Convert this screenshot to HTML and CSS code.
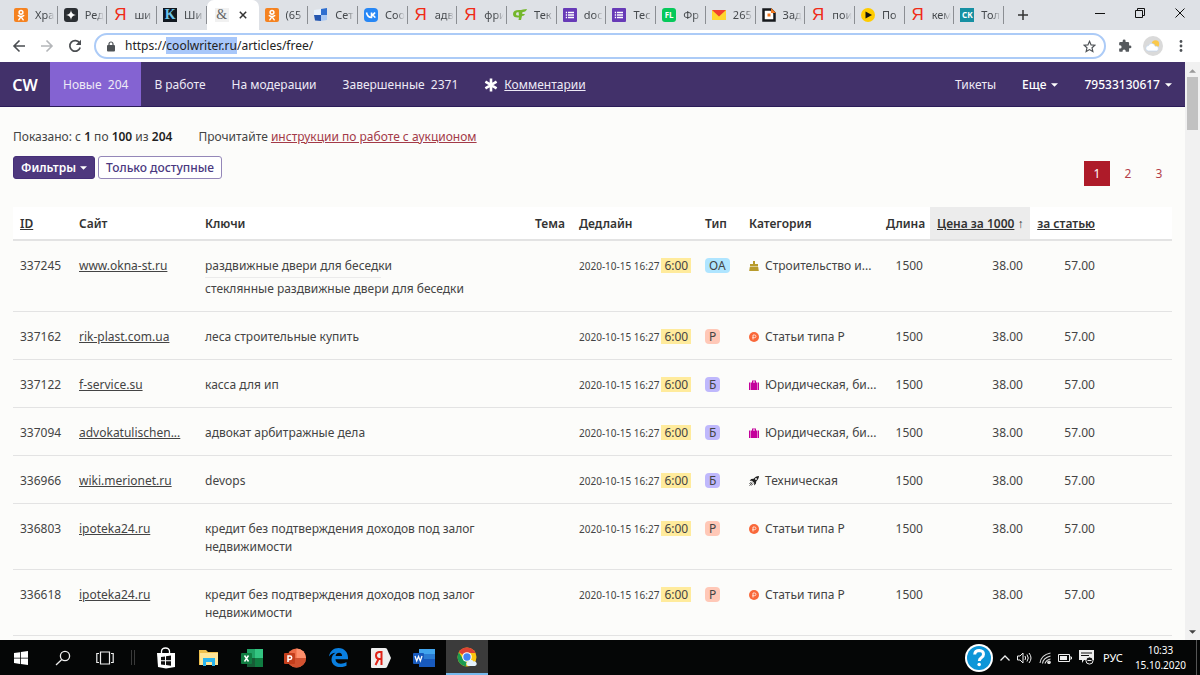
FILE: index.html
```html
<!DOCTYPE html>
<html lang="ru">
<head>
<meta charset="utf-8">
<title>coolwriter.ru</title>
<link rel="stylesheet" href="styles.css">
</head>
<body>
<svg class="defs" aria-hidden="true">
  <symbol id="ok" viewBox="0 0 14 14"><rect width="14" height="14" rx="2" fill="#f58220"/><circle cx="7" cy="4.3" r="1.9" fill="none" stroke="#fff" stroke-width="1.5"/><path d="M4.3 7.6q2.7 1.8 5.4 0M7 8.6L4.8 11.8M7 8.6l2.2 3.2" fill="none" stroke="#fff" stroke-width="1.5" stroke-linecap="round"/></symbol>
  <symbol id="form" viewBox="0 0 14 14"><rect width="14" height="14" rx="1" fill="#673ab7"/><path d="M5 4.5h6M5 7h6M5 9.500h6M2.800 4.500h1.300M2.800 7h1.300M2.800 9.500h1.300" stroke="#fff" stroke-width="1.300"/></symbol>
  <symbol id="brush" viewBox="0 0 10 10"><path d="M4 0h2v3h3v2.500H1V3h3zM.8 6h8.400l.6 4H.2z" fill="#b89b2c"/></symbol>
  <symbol id="rub" viewBox="0 0 10 10"><circle cx="5" cy="5" r="5" fill="#f9683a"/><path d="M4 7.500V3h1.600a1.300 1.300 0 0 1 0 2.700H3.300" fill="none" stroke="#ffe0d2" stroke-width="1"/></symbol>
  <symbol id="bag" viewBox="0 0 10 10"><path d="M0 2.500h1.200V10H0zM1.700 2.500H3V.5h4v2h1.300V10H1.700zM4 1.400v1.100h2V1.400zM8.800 2.500H10V10H8.800z" fill="#c4009b" fill-rule="evenodd"/></symbol>
  <symbol id="rocket" viewBox="0 0 10 10"><path d="M10 0C7.500.2 6 1.200 4.600 2.700L2.200 3 .6 4.800l2.400-.1L5.200 7l-.1 2.400L6.900 7.800l.3-2.400C8.700 4 9.800 2.500 10 0z" fill="#222"/><path d="M2.500 5.800L.4 8M3.300 6.700L.5 9.600M4.200 7.500L2.200 9.600" stroke="#222" stroke-width=".8"/><circle cx="7" cy="3" r=".9" fill="#fff"/></symbol>
  <symbol id="caret" viewBox="0 0 8 4"><path d="M0 0h8L4 4z" fill="currentColor"/></symbol>
</svg>

<header class="browser">
  <div class="tabstrip">
    <nav class="tabs" aria-label="Вкладки">
      <a class="tab" href="#"><svg class="fav"><use href="#ok"/></svg><span class="tab-text">Хра</span></a>
      <a class="tab" href="#"><svg class="fav" viewBox="0 0 14 14"><rect width="14" height="14" rx="3" fill="#2b2f33"/><path d="M7 2q.4 4.600 5 5-4.600.4-5 5-.4-4.600-5-5 4.600-.4 5-5z" fill="#fff"/></svg><span class="tab-text">Ред</span></a>
      <a class="tab" href="#"><span class="fav ya">Я</span><span class="tab-text">ши</span></a>
      <a class="tab" href="#"><span class="fav kk">K</span><span class="tab-text">Ши</span></a>
      <a class="tab tab-active" href="#"><span class="fav amp">&amp;</span><svg class="close" viewBox="0 0 8 8"><path d="M.8.8l6.400 6.400M7.200.8L.8 7.200" stroke="#333" stroke-width="1.500"/></svg></a>
      <a class="tab" href="#"><svg class="fav"><use href="#ok"/></svg><span class="tab-text">(65</span></a>
      <a class="tab" href="#"><svg class="fav" viewBox="0 0 14 14"><path d="M0 2l7-1v6H0z" fill="#e8f1fb"/><path d="M7 1l6-1v7H7z" fill="#2f6fd0"/><path d="M0 7h7v6l-6-.5z" fill="#2456b0"/><path d="M7 7h6v5l-6 1z" fill="#a9c8f3"/></svg><span class="tab-text">Сет</span></a>
      <a class="tab" href="#"><svg class="fav" viewBox="0 0 14 14"><rect width="14" height="14" rx="4" fill="#2787f5"/><path d="M2.500 4.500q1 5 5 5v-5M7.500 7q2.200-.2 3.500-2.500M7.500 7q2.500.3 3.800 2.600" fill="none" stroke="#fff" stroke-width="1.600"/></svg><span class="tab-text">Соо</span></a>
      <a class="tab" href="#"><span class="fav ya">Я</span><span class="tab-text">адв</span></a>
      <a class="tab" href="#"><span class="fav ya">Я</span><span class="tab-text">фри</span></a>
      <a class="tab" href="#"><svg class="fav" viewBox="0 0 14 14"><path d="M14 1q-1 3-4 3h-.5l-.3 2H12q-.5 2-3 2L8 12H5.500L6 9.500Q0 10 0 6q0-4 6-4 2 0 4-.5zM5.500 4Q3 4 3 6t3 1.500z" fill="#74b72b" fill-rule="evenodd"/></svg><span class="tab-text">Тек</span></a>
      <a class="tab" href="#"><svg class="fav"><use href="#form"/></svg><span class="tab-text">doc</span></a>
      <a class="tab" href="#"><svg class="fav"><use href="#form"/></svg><span class="tab-text">Тес</span></a>
      <a class="tab" href="#"><span class="fav fl">FL</span><span class="tab-text">Фр</span></a>
      <a class="tab" href="#"><svg class="fav" viewBox="0 0 14 14"><path d="M0 2h14v10H0z" fill="#ffd52e"/><path d="M0 2h14L7 8.500z" fill="#f0402f"/></svg><span class="tab-text">265</span></a>
      <a class="tab" href="#"><svg class="fav" viewBox="0 0 14 14"><path d="M1.500 1.500H9l3.500 3.500v7.500h-11z" fill="#fff" stroke="#16181c" stroke-width="2.500"/><path d="M9 0l5 5H9z" fill="#f47b20"/><rect x="5.500" y="5.500" width="3" height="3" fill="#f47b20"/></svg><span class="tab-text">Зад</span></a>
      <a class="tab" href="#"><span class="fav ya">Я</span><span class="tab-text">пои</span></a>
      <a class="tab" href="#"><svg class="fav" viewBox="0 0 14 14"><circle cx="7" cy="7" r="7" fill="#fc0"/><path d="M4.500 3.500L11 7l-6.500 3.500z" fill="#111"/></svg><span class="tab-text">По</span></a>
      <a class="tab" href="#"><span class="fav ya">Я</span><span class="tab-text">кем</span></a>
      <a class="tab" href="#"><span class="fav ck">СК</span><span class="tab-text">Тол</span></a>
    </nav>
    <button class="new-tab" aria-label="Новая вкладка"><svg width="12" height="12" viewBox="0 0 12 12"><path d="M6 1v10M1 6h10" stroke="#333" stroke-width="1.500"/></svg></button>
    <div class="window-buttons">
      <button aria-label="Свернуть"><svg width="10" height="10"><path d="M0 5.500h10" stroke="#111"/></svg></button>
      <button aria-label="Восстановить"><svg width="10" height="10" fill="none" stroke="#111"><path d="M.5 2.500h7v7h-7zM2.500 2.500v-2h7v7h-2"/></svg></button>
      <button aria-label="Закрыть"><svg width="10" height="10"><path d="M.5.5l9 9M9.500.5l-9 9" stroke="#111"/></svg></button>
    </div>
  </div>
  <div class="toolbar">
    <button class="tool" aria-label="Назад"><svg width="14" height="14" viewBox="0 0 14 14" fill="none" stroke="#4a4d51" stroke-width="1.600"><path d="M13 7H2M7.500 1.500L2 7l5.500 5.500"/></svg></button>
    <button class="tool" aria-label="Вперед"><svg width="14" height="14" viewBox="0 0 14 14" fill="none" stroke="#b4b6b9" stroke-width="1.600"><path d="M1 7h11M6.500 1.500L12 7l-5.500 5.500"/></svg></button>
    <button class="tool" aria-label="Обновить"><svg width="14" height="14" viewBox="0 0 14 14"><path d="M11.600 4A5.300 5.300 0 1 0 12.200 8.500" fill="none" stroke="#4a4d51" stroke-width="1.700"/><path d="M13 .8V6H7.800z" fill="#4a4d51"/></svg></button>
    <div class="address">
      <svg width="8" height="11" viewBox="0 0 8 11"><path d="M2 4.500V3a2 2 0 0 1 4 0v1.500" fill="none" stroke="#4e5256" stroke-width="1.200"/><rect y="4" width="8" height="6.500" rx="1" fill="#4e5256"/></svg>
      <span class="url">https://<mark>coolwriter.ru</mark>/articles/free/</span>
      <svg width="13" height="13" viewBox="0 0 24 24"><path d="M12 2.500l2.900 6.500 7.100.7-5.300 4.700 1.500 7-6.200-3.700-6.200 3.700 1.500-7L2 9.700 9.100 9z" fill="none" stroke="#4e5256" stroke-width="2.200"/></svg>
    </div>
    <button class="tool" aria-label="Расширения"><svg width="14" height="14" viewBox="0 0 24 24"><path d="M20.500 11H19V7a2 2 0 0 0-2-2h-4V3.500a2.500 2.500 0 0 0-5 0V5H4a2 2 0 0 0-2 2v3.800h1.500a2.700 2.700 0 0 1 0 5.400H2V20a2 2 0 0 0 2 2h3.800v-1.500a2.700 2.700 0 0 1 5.400 0V22H17a2 2 0 0 0 2-2v-4h1.500a2.500 2.500 0 0 0 0-5z" fill="#55595d"/></svg></button>
    <button class="tool" aria-label="Профиль"><svg width="20" height="20" viewBox="0 0 20 20"><circle cx="10" cy="10" r="10" fill="#dadada"/><circle cx="12.500" cy="8" r="3.700" fill="#fbc94a"/><path d="M5.500 15a2.700 2.700 0 0 1 0-5.400 3.500 3.500 0 0 1 6.700.6 2.400 2.400 0 0 1 1.500 4.800z" fill="#fff" stroke="#b9d2ee" stroke-width=".6"/></svg></button>
    <button class="tool" aria-label="Меню"><svg width="4" height="14"><g fill="#4e5256"><circle cx="2" cy="2.500" r="1.400"/><circle cx="2" cy="7" r="1.400"/><circle cx="2" cy="11.500" r="1.400"/></g></svg></button>
  </div>
</header>

<div class="viewport">
  <div class="page">
    <nav class="site-nav">
      <a class="brand" href="#">CW</a>
      <a class="nav-link nav-current" href="#">Новые&nbsp; 204</a>
      <a class="nav-link" href="#">В работе</a>
      <a class="nav-link" href="#">На модерации</a>
      <a class="nav-link" href="#">Завершенные&nbsp; 2371</a>
      <a class="nav-link nav-comments" href="#"><svg width="14" height="14" viewBox="0 0 14 14"><path d="M7 .5v13M1.400 3.700l11.200 6.600M12.600 3.700L1.400 10.300" stroke="#fff" stroke-width="2.600"/></svg><u>Комментарии</u></a>
      <a class="nav-link nav-push" href="#">Тикеты</a>
      <button class="nav-link nav-menu">Еще <svg width="7" height="4"><use href="#caret"/></svg></button>
      <button class="nav-link nav-menu">79533130617 <svg width="7" height="4"><use href="#caret"/></svg></button>
    </nav>
    <main class="content">
      <section class="list-head">
        <div>
          <div class="info"><span>Показано: с <b>1</b> по <b>100</b> из <b>204</b></span><span>Прочитайте <a href="#">инструкции по работе с аукционом</a></span></div>
          <div class="filters"><button class="btn btn-solid">Фильтры <svg width="7" height="4"><use href="#caret"/></svg></button><button class="btn">Только доступные</button></div>
        </div>
        <nav class="pager" aria-label="Страницы"><a class="pager-current" href="#">1</a><a href="#">2</a><a href="#">3</a></nav>
      </section>
      <table class="articles">
        <colgroup><col class="c-id"><col class="c-site"><col><col class="c-theme"><col class="c-date"><col class="c-type"><col class="c-cat"><col class="c-len"><col class="c-price"><col class="c-total"><col class="c-end"></colgroup>
        <thead><tr><th><a href="#">ID</a></th><th>Сайт</th><th>Ключи</th><th>Тема</th><th>Дедлайн</th><th>Тип</th><th>Категория</th><th class="num">Длина</th><th class="num sorted"><a href="#">Цена за 1000</a> ↑</th><th class="num"><a href="#">за статью</a></th><th></th></tr></thead>
        <tbody>
          <tr><td>337245</td><td><a href="#">www.okna-st.ru</a></td><td><div class="key key-first">раздвижные двери для беседки</div><div class="key">стеклянные раздвижные двери для беседки</div></td><td></td><td><time>2020-10-15 16:27</time><span class="left">6:00</span></td><td><span class="type type-oa">ОА</span></td><td><svg class="cat"><use href="#brush"/></svg>Строительство и...</td><td class="num">1500</td><td class="num">38.00</td><td class="num">57.00</td><td></td></tr>
          <tr><td>337162</td><td><a href="#">rik-plast.com.ua</a></td><td>леса строительные купить</td><td></td><td><time>2020-10-15 16:27</time><span class="left">6:00</span></td><td><span class="type type-r">Р</span></td><td><svg class="cat"><use href="#rub"/></svg>Статьи типа Р</td><td class="num">1500</td><td class="num">38.00</td><td class="num">57.00</td><td></td></tr>
          <tr><td>337122</td><td><a href="#">f-service.su</a></td><td>касса для ип</td><td></td><td><time>2020-10-15 16:27</time><span class="left">6:00</span></td><td><span class="type type-b">Б</span></td><td><svg class="cat"><use href="#bag"/></svg>Юридическая, би...</td><td class="num">1500</td><td class="num">38.00</td><td class="num">57.00</td><td></td></tr>
          <tr><td>337094</td><td><a href="#">advokatulischen...</a></td><td>адвокат арбитражные дела</td><td></td><td><time>2020-10-15 16:27</time><span class="left">6:00</span></td><td><span class="type type-b">Б</span></td><td><svg class="cat"><use href="#bag"/></svg>Юридическая, би...</td><td class="num">1500</td><td class="num">38.00</td><td class="num">57.00</td><td></td></tr>
          <tr><td>336966</td><td><a href="#">wiki.merionet.ru</a></td><td>devops</td><td></td><td><time>2020-10-15 16:27</time><span class="left">6:00</span></td><td><span class="type type-b">Б</span></td><td><svg class="cat"><use href="#rocket"/></svg>Техническая</td><td class="num">1500</td><td class="num">38.00</td><td class="num">57.00</td><td></td></tr>
          <tr><td>336803</td><td><a href="#">ipoteka24.ru</a></td><td><div class="key">кредит без подтверждения доходов под залог недвижимости</div></td><td></td><td><time>2020-10-15 16:27</time><span class="left">6:00</span></td><td><span class="type type-r">Р</span></td><td><svg class="cat"><use href="#rub"/></svg>Статьи типа Р</td><td class="num">1500</td><td class="num">38.00</td><td class="num">57.00</td><td></td></tr>
          <tr><td>336618</td><td><a href="#">ipoteka24.ru</a></td><td><div class="key">кредит без подтверждения доходов под залог недвижимости</div></td><td></td><td><time>2020-10-15 16:27</time><span class="left">6:00</span></td><td><span class="type type-r">Р</span></td><td><svg class="cat"><use href="#rub"/></svg>Статьи типа Р</td><td class="num">1500</td><td class="num">38.00</td><td class="num">57.00</td><td></td></tr>
        </tbody>
      </table>
    </main>
  </div>
  <div class="scrollbar" aria-hidden="true"><svg width="7" height="4" viewBox="0 0 8 4"><path d="M0 4h8L4 0z" fill="#999"/></svg><div class="thumb"></div><svg width="7" height="4" viewBox="0 0 8 4"><path d="M0 0h8L4 4z" fill="#444"/></svg></div>
</div>

<footer class="taskbar">
  <button class="task" aria-label="Пуск"><svg width="14" height="14"><path d="M0 2l6-.8v5.500H0zM6.800 1L14 0v6.700H6.800zM0 7.400h6v5.500L0 12zM6.800 7.400H14V14l-7.200-1z" fill="#fff"/></svg></button>
  <button class="task" aria-label="Поиск"><svg width="16" height="16" fill="none" stroke="#eee" stroke-width="1.300"><circle cx="10" cy="6" r="4.600"/><path d="M6.800 9.500L1 15"/></svg></button>
  <button class="task" aria-label="Представление задач"><svg width="18" height="14" fill="none" stroke="#eee" stroke-width="1.200"><path d="M4.500 1h9v12h-9zM3 2.500H.8v9H3M15 2.500h2.200v9H15"/></svg></button>
  <span class="task-sep"></span>
  <div class="apps">
    <button class="task" aria-label="Магазин"><svg width="20" height="22" viewBox="0 0 20 22"><path d="M5.500 6V4q.5-3 4-3t4 3v2" fill="none" stroke="#fff" stroke-width="1.300"/><path d="M1 6h18v14l-9 1.500L2 20z" fill="#fff"/><path d="M5 10l4-.6v3.800H5zM10 9.200l5-.7v4.700h-5zM5 14.200h4V18l-4-.6zM10 14.200h5v4.600l-5-.7z" fill="#111"/></svg></button>
    <button class="task" aria-label="Проводник"><svg width="20" height="17" viewBox="0 0 20 17"><path d="M0 1h7l2 2h10v13H0z" fill="#eebf4d"/><path d="M1 4h18v12H1z" fill="#ffe596"/><path d="M4 9h12v8h-3v-4H7v4H4z" fill="#2ab4ee"/></svg></button>
    <button class="task" aria-label="Excel"><svg width="22" height="20" viewBox="0 0 22 20"><path d="M6 1h8v9H6z" fill="#21a366"/><path d="M14 1h8v9h-8z" fill="#33c481"/><path d="M6 10h8v9H6z" fill="#185c37"/><path d="M14 10h8v9h-8z" fill="#107c41"/><rect y="5" width="11" height="11" rx="1" fill="#107c41"/><path d="M3.500 7.500l4 6M7.500 7.500l-4 6" stroke="#fff" stroke-width="1.500"/></svg></button>
    <button class="task" aria-label="PowerPoint"><svg width="22" height="20" viewBox="0 0 22 20"><circle cx="12.500" cy="10" r="9.500" fill="#ed6c47"/><path d="M12.500.5A9.500 9.500 0 0 1 22 10h-9.500z" fill="#ff8f6b"/><path d="M3 10h19a9.500 9.500 0 0 1-19 0z" fill="#d35230"/><rect y="5" width="11" height="11" rx="1" fill="#c43e1c"/><path d="M4 14V8h2a1.700 1.700 0 0 1 0 3.400H4" fill="none" stroke="#fff" stroke-width="1.500"/></svg></button>
    <button class="task" aria-label="Edge"><svg width="19" height="19" viewBox="0 0 19 19"><path d="M0 8.500C1 3 4.500 0 9.500 0 15.500 0 19 4.500 19 9.500v1.800H6.500c.2 5 6.500 5.500 11 2.700v3.700C11 21 2.500 18.500 2.500 11.500c0-3 1.500-5.500 4-6.800C4 5 1.500 6 0 8.500zM6.600 7.900h6.500c0-4.500-6-4.200-6.500 0z" fill="#0a7fe0"/></svg></button>
    <button class="task" aria-label="Яндекс"><svg width="20" height="20" viewBox="0 0 20 20"><path d="M1 0h13q1.500 0 2 1l4 9-4 9q-.5 1-2 1H1q-1 0-1-1V1q0-1 1-1z" fill="#eee"/><path d="M10.500 3v14M10.500 4H8q-3 .3-3 3.500T8 11h2.500M7.500 11L4.500 17" fill="none" stroke="#e02318" stroke-width="2"/></svg></button>
    <button class="task" aria-label="Word"><svg width="22" height="20" viewBox="0 0 22 20"><path d="M6 1h16v5H6z" fill="#41a5ee"/><path d="M6 6h16v5H6z" fill="#2b7cd3"/><path d="M6 11h16v8H6z" fill="#185abd"/><rect y="5" width="11" height="11" rx="1" fill="#185abd"/><path d="M2 8l1.700 5L5.500 8.500 7.300 13 9 8" fill="none" stroke="#fff" stroke-width="1.300"/></svg></button>
    <button class="task task-active" aria-label="Chrome"><svg width="20" height="20" viewBox="0 0 20 20"><circle cx="10" cy="10" r="9.500" fill="#fdc50f"/><path d="M10 10L1.800 5.200A9.500 9.500 0 0 1 18.500 6H10z" fill="#df4334"/><path d="M10 10l-1 9.500A9.500 9.500 0 0 1 1.800 5.200L6 12z" fill="#1c9b51"/><circle cx="10" cy="10" r="4.800" fill="#fff"/><circle cx="10" cy="10" r="3.700" fill="#4384f3"/><path d="M11 19a2.300 2.300 0 0 1 .3-4.500 2.800 2.800 0 0 1 5.200 0A2.300 2.300 0 0 1 18 19z" fill="#e5f2fd"/></svg></button>
  </div>
  <div class="tray">
    <button class="help" aria-label="Справка"><svg width="28" height="28" viewBox="0 0 28 28"><circle cx="14" cy="14" r="14" fill="#fff"/><circle cx="14" cy="14" r="12" fill="#0d96d8"/><path d="M9.700 10.500q.3-4 4.500-4 4.300.2 4.300 3.700 0 2.200-2.200 3.500-2 1.200-2 3.300" fill="none" stroke="#fff" stroke-width="3"/><circle cx="14.200" cy="20.500" r="1.800" fill="#fff"/></svg></button>
    <svg width="10" height="6" fill="none" stroke="#eee" stroke-width="1.300"><path d="M.5 5.500L5 1l4.500 4.500"/></svg>
    <svg width="15" height="12" viewBox="0 0 15 12" fill="none" stroke="#eee"><path d="M.5 4H3l3-3v10L3 8H.5zM8 4q1.300 2 0 4M10 2.500q2.500 3.500 0 7M12 1q4 5 0 10"/></svg>
    <svg width="12" height="12" viewBox="0 0 12 12" fill="none" stroke="#ddd" stroke-width="1.100"><path d="M1 11Q2 3 11.500 1M3.500 11.500Q4 6 11.500 4M6 11.500Q7 8 11.500 7"/><circle cx="10" cy="10.300" r="1.300" fill="#ddd"/></svg>
    <svg width="14" height="8" viewBox="0 0 14 8"><path d="M.5.5h11v7H.5zM12 3h1.500v2H12" fill="none" stroke="#eee"/><path d="M2 2h7v4H2z" fill="#eee"/></svg>
    <svg width="15" height="15" viewBox="0 0 15 15"><path d="M0 0h15v10H5l-2 3v-3H0z" fill="#eee"/><path d="M2 3h11M2 5.500h8" stroke="#111"/><circle cx="10.500" cy="10.500" r="3.600" fill="#111" stroke="#eee"/><path d="M8.500 10.500h4" stroke="#eee"/></svg>
    <span class="lang">РУС</span>
    <div class="clock"><time>10:33</time><time>15.10.2020</time></div>
    <span class="desktop-edge"></span>
  </div>
</footer>
</body>
</html>
```
FILE: styles.css
```css
* { box-sizing: border-box; }

body {
  margin: 0;
  height: 100vh;
  display: flex;
  flex-direction: column;
  overflow: hidden;
  font: 12px/18px "Noto Sans", "Open Sans", sans-serif;
  color: #444;
}

button {
  border: 0;
  padding: 0;
  background: none;
  font: inherit;
  color: inherit;
}

a { color: inherit; }
svg { flex: none; }
.defs { display: none; }

/* Browser frame */
.browser { flex: none; }

.tabstrip {
  display: flex;
  height: 30px;
  padding-left: 8px;
  background: #dee1e6;
}

.tabs { display: flex; flex: 1; min-width: 0; }

.tab {
  display: flex;
  flex: 1 1 0;
  min-width: 0;
  align-items: center;
  gap: 7px;
  padding: 0 1px 0 6px;
  color: #45494d;
  font-size: 11px;
  text-decoration: none;
  background: linear-gradient(#8b8e93, #8b8e93) right center / 1px 18px no-repeat;
}

.tab-active {
  gap: 10px;
  padding-left: 8px;
  background: #fff;
  border-radius: 7px 7px 0 0;
}

.tab-text {
  flex: 1;
  overflow: hidden;
  white-space: nowrap;
  mask-image: linear-gradient(90deg, #000 50%, transparent 90%);
}

.fav {
  flex: none;
  width: 14px;
  height: 14px;
  line-height: 14px;
  text-align: center;
  font-weight: 700;
}

.close { width: 8px; height: 8px; }
.ya { color: #f02a17; font-family: "Liberation Sans", Arial, sans-serif; font-size: 17px; font-weight: 400; }
.kk { background: #11181f; color: #6cc4ea; font-family: "Liberation Serif", serif; font-size: 14px; }
.amp { background: #f1f1f1; color: #666; font-family: "Liberation Serif", serif; font-size: 14px; font-weight: 400; }
.fl { background: #06c95b; color: #fff; border-radius: 3px; font-size: 8px; }
.ck { background: #1690a3; color: #fff; font-size: 8px; }

.new-tab { width: 38px; display: grid; place-items: center; }
.window-buttons { display: flex; flex: none; width: 158px; padding: 0 0 5px 38px; }
.window-buttons button { flex: 1; display: grid; place-items: center; }

.toolbar {
  display: flex;
  align-items: center;
  height: 32px;
  padding: 0 5px;
  background: #fff;
}

.tool { width: 28px; height: 28px; display: grid; place-items: center; flex: none; }
.address + .tool { margin-left: 5px; }

.address {
  flex: 1;
  display: flex;
  align-items: center;
  gap: 10px;
  height: 26px;
  margin-left: 5px;
  padding: 0 8px 0 11px;
  border: 2px solid #accbf7;
  border-radius: 13px;
}

.url { flex: 1; color: #222; line-height: 18px; }
.url mark { background: #a8c7fa; color: inherit; }

/* Site */
.viewport { display: flex; flex: 1; min-height: 0; background: #fcfcfa; }
.page { flex: 1; min-width: 0; overflow: hidden; }

.site-nav {
  display: flex;
  height: 45px;
  background: #42316a;
  border-bottom: 1px solid #2b1c58;
  color: #eeeaf6;
}

.brand {
  width: 50px;
  line-height: 46px;
  text-align: center;
  font-size: 16px;
  font-weight: 600;
  color: #fff;
  text-decoration: none;
}

.nav-link {
  display: flex;
  align-items: center;
  gap: 5px;
  padding: 2px 13px 0;
  white-space: nowrap;
  text-decoration: none;
}

.nav-current { background: #8463d2; }
.nav-comments { gap: 6px; }
.nav-push { margin-left: auto; }
.nav-menu { font-weight: 500; color: #fff; }

.content { padding: 21px 13px 0; }

.list-head {
  display: flex;
  justify-content: space-between;
  align-items: flex-end;
  margin-bottom: 21px;
}

.info { display: flex; gap: 26px; margin-bottom: 10px; }
.info b { font-weight: 600; color: #222; }
.info a { color: #a33a48; }
.filters { display: flex; gap: 3px; margin-bottom: 7px; }

.btn {
  display: flex;
  align-items: center;
  gap: 4px;
  height: 23px;
  padding: 0 7px;
  border: 1px solid #9487b8;
  border-radius: 3px;
  background: #fff;
  color: #4a3880;
  font-weight: 500;
}

.btn-solid { background: #4e387e; border-color: #452f78; color: #fff; font-weight: 600; }

.pager { display: flex; gap: 5px; }

.pager a {
  width: 26px;
  height: 25px;
  line-height: 25px;
  text-align: center;
  text-decoration: none;
  color: #b43f49;
}

.pager .pager-current { background: #ae1b29; color: #fff; }

.articles { width: 100%; table-layout: fixed; border-collapse: separate; border-spacing: 0; }
.c-id { width: 59px; }
.c-site { width: 126px; }
.c-theme { width: 44px; }
.c-date { width: 126px; }
.c-type { width: 44px; }
.c-cat { width: 137px; }
.c-len { width: 51px; }
.c-price { width: 100px; }
.c-total { width: 72px; }
.c-end { width: 70px; }

.articles th {
  height: 34px;
  padding: 2px 7px 0;
  background: #fff;
  border-bottom: 2px solid #e3e3e3;
  color: #333;
  font-weight: 600;
  text-align: left;
  white-space: nowrap;
}

.articles td {
  padding: 16px 7px 13px;
  border-bottom: 1px solid #e3e3e3;
  vertical-align: top;
  white-space: nowrap;
}

.articles .num { text-align: right; }
.articles .sorted { background: #ececec; }

.key { max-width: 290px; white-space: normal; }
.key-first { margin-bottom: 2px; padding-bottom: 3px; background: linear-gradient(#ebebeb, #ebebeb) left bottom / 176px 1px no-repeat; }

.articles time { font-size: 10px; }
.left { display: inline-block; height: 15px; line-height: 15px; margin-left: 2px; padding: 0 3px; background: #ffeb9c; }
.type { display: inline-block; height: 15px; line-height: 15px; padding: 0 4px; border-radius: 4px; }
.type-oa { background: #afe5ff; }
.type-r { background: #ffc8b7; }
.type-b { background: #bfb8fc; }
.cat { width: 10px; height: 10px; margin-right: 6px; vertical-align: -1px; }

.scrollbar {
  display: flex;
  flex-direction: column;
  align-items: center;
  width: 15px;
  padding: 7px 0 6px;
  background: #f1f1f1;
}

.thumb { width: 11px; height: 53px; margin: 4px 0 auto; background: #c1c1c1; }

/* Taskbar */
.taskbar { display: flex; flex: none; height: 35px; background: #050606; color: #fff; }
.task { width: 42px; display: grid; place-items: center; }
.task-sep { width: 4px; height: 15px; margin: 10px 10px 0 5px; border: solid #3a3a3a; border-width: 0 1px; }
.apps { display: flex; gap: 1px; }
.task-active { background: #3b3b3b; border-bottom: 2px solid #76b9ed; }
.tray { display: flex; align-items: center; gap: 7px; margin-left: auto; }
.help { height: 28px; }
.lang { margin: 0 5px 0 2px; font-size: 11px; }
.clock { display: flex; flex-direction: column; text-align: center; font-size: 10px; line-height: 15px; }
.desktop-edge { align-self: stretch; width: 4px; margin-left: 3px; border-left: 1px solid #555; }
```
